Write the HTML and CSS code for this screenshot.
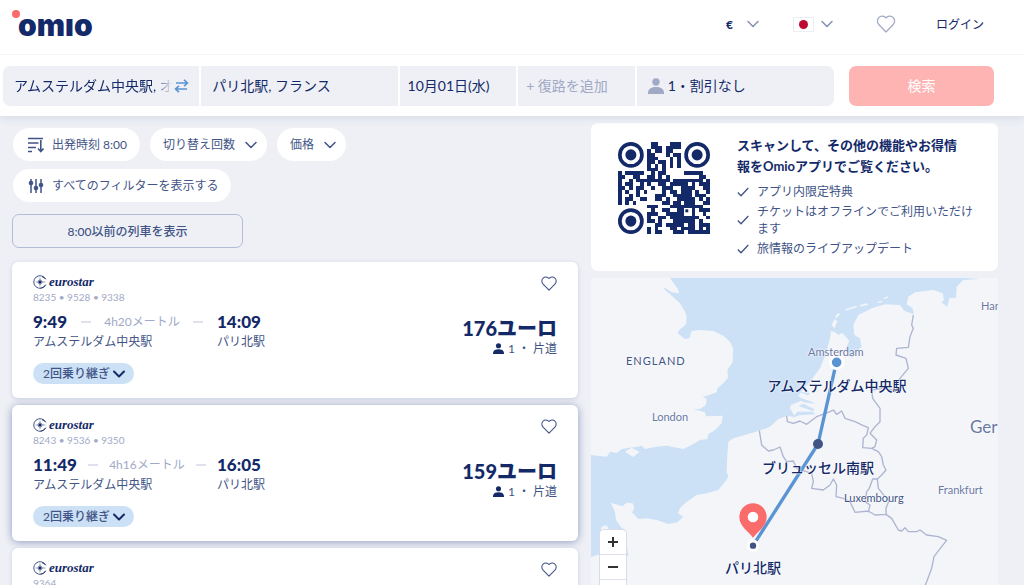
FILE: index.html
```html
<!DOCTYPE html>
<html lang="ja">
<head>
<meta charset="utf-8">
<meta name="viewport" content="width=device-width, initial-scale=1">
<title>Omio</title>
<link rel="stylesheet" href="styles.css">
</head>
<body>
<svg class="defs" aria-hidden="true">
  <symbol id="heart" viewBox="0 0 18 17"><path d="M9 16 2.300 9.200C.4 7.200.4 4 2.300 2.300 4.100.5 7.200.6 9 2.800 10.800.6 13.900.5 15.700 2.300 17.600 4 17.600 7.200 15.700 9.200Z" fill="none" stroke="currentColor" stroke-width="1.200" stroke-linejoin="round"/></symbol>
  <symbol id="chevron" viewBox="0 0 12 8"><path d="m1 1.500 5 5 5-5" fill="none" stroke="currentColor" stroke-linecap="round" stroke-linejoin="round"/></symbol>
  <symbol id="person" viewBox="0 0 16 16"><circle cx="8" cy="4" r="3.700"/><path d="M0 16v-1.500C.5 10.500 3.500 9 8 9s7.500 1.500 8 5.500V16Z"/></symbol>
  <symbol id="tick" viewBox="0 0 12 10"><path d="m.8 5.500 3.200 3.300L11.300 1" fill="none" stroke="currentColor" stroke-width="1.300"/></symbol>
  <symbol id="star" viewBox="0 0 14 14"><path d="M12.700 4.200A6.300 6.300 0 1 0 12.700 9.800M7.500 13.200A6.300 6.300 0 0 0 12.700 9.800M12.700 4.200A5 5 0 0 0 9 1.800" fill="none" stroke="currentColor" stroke-width=".8"/><path d="m7 2 .6 3.900L9.200 4.800 8.100 6.400 13.500 7 8.100 7.600 9.200 9.200 7.600 8.100 7 12 6.400 8.100 4.800 9.200 5.900 7.600 2 7l3.900-.6L4.800 4.800l1.600 1.100Z"/></symbol>
</svg>

<header class="top">
  <div class="topbar">
    <a class="logo" href="#" aria-label="omio"><span class="logo-dot"></span>omıo</a>
    <nav class="tools">
      <label class="currency"><select aria-label="通貨"><option>€</option></select><svg class="chev"><use href="#chevron"/></svg></label>
      <button class="lang" type="button" aria-label="言語"><span class="flag"></span><svg class="chev"><use href="#chevron"/></svg></button>
      <button class="fav-top" type="button" aria-label="お気に入り"><svg width="20" height="18"><use href="#heart"/></svg></button>
      <a class="login" href="#">ログイン</a>
    </nav>
  </div>
  <form class="search">
    <div class="fields">
      <div class="field">
        <input class="fade" type="text" aria-label="出発地" value="アムステルダム中央駅, オランダ">
        <button class="swap" type="button" aria-label="入れ替え"><svg width="15" height="14" viewBox="0 0 15 14"><path d="M2 4h12M10 .8 13.500 4 10 7.200M13 10H1M5 6.800 1.500 10 5 13.200" fill="none" stroke="currentColor" stroke-width="1.600"/></svg></button>
      </div>
      <div class="field"><input type="text" aria-label="目的地" value="パリ北駅, フランス"></div>
      <div class="field date"><input type="text" aria-label="往路" value="10月01日(水)"></div>
      <div class="field date"><input type="text" aria-label="復路" placeholder="+ 復路を追加"></div>
      <button class="field people" type="button"><svg width="16" height="16"><use href="#person"/></svg>1・割引なし</button>
    </div>
    <button class="submit" type="submit">検索</button>
  </form>
</header>

<main class="page">
  <section class="results">
    <div class="filters">
      <button class="pill" type="button"><svg width="16" height="16" viewBox="0 0 16 16"><path d="M0 1.500h15M0 6h10.500M0 10.500h8M0 14.500h4M12.800 3v11M10 11.500l2.800 3 2.700-3" fill="none" stroke="currentColor" stroke-width="1.600"/></svg>出発時刻 8:00</button>
      <button class="pill drop" type="button">切り替え回数<svg class="chev"><use href="#chevron"/></svg></button>
      <button class="pill drop" type="button">価格<svg class="chev"><use href="#chevron"/></svg></button>
      <button class="pill" type="button"><svg width="16" height="16" viewBox="0 0 16 16"><path d="M3 1v14M8 1v14M13 1v14" stroke="currentColor" stroke-width="1.500"/><circle cx="3" cy="5" r="2.300"/><circle cx="8" cy="10" r="2.300"/><circle cx="13" cy="7" r="2.300"/></svg>すべてのフィルターを表示する</button>
    </div>
    <button class="earlier" type="button">8:00以前の列車を表示</button>

    <div class="cards">
      <article class="card">
        <div class="trip">
          <div class="brand"><svg width="14" height="14"><use href="#star"/></svg>eurostar</div>
          <div class="numbers">8235 • 9528 • 9338</div>
          <div class="legs">
            <div class="times"><b>9:49</b><span class="span"><i></i><span>4h20メートル</span><i></i></span></div><b>14:09</b>
            <span>アムステルダム中央駅</span><span>パリ北駅</span>
          </div>
          <button class="changes" type="button">2回乗り継ぎ<svg class="chev"><use href="#chevron"/></svg></button>
        </div>
        <div class="side">
          <button class="fav" type="button" aria-label="お気に入り"><svg width="16" height="15"><use href="#heart"/></svg></button>
          <div class="price">176ユーロ</div>
          <div class="fare"><svg width="11" height="11"><use href="#person"/></svg>1 ・ 片道</div>
        </div>
      </article>
      <article class="card active">
        <div class="trip">
          <div class="brand"><svg width="14" height="14"><use href="#star"/></svg>eurostar</div>
          <div class="numbers">8243 • 9536 • 9350</div>
          <div class="legs">
            <div class="times"><b>11:49</b><span class="span"><i></i><span>4h16メートル</span><i></i></span></div><b>16:05</b>
            <span>アムステルダム中央駅</span><span>パリ北駅</span>
          </div>
          <button class="changes" type="button">2回乗り継ぎ<svg class="chev"><use href="#chevron"/></svg></button>
        </div>
        <div class="side">
          <button class="fav" type="button" aria-label="お気に入り"><svg width="16" height="15"><use href="#heart"/></svg></button>
          <div class="price">159ユーロ</div>
          <div class="fare"><svg width="11" height="11"><use href="#person"/></svg>1 ・ 片道</div>
        </div>
      </article>
      <article class="card">
        <div class="trip">
          <div class="brand"><svg width="14" height="14"><use href="#star"/></svg>eurostar</div>
          <div class="numbers">9364</div>
        </div>
        <div class="side">
          <button class="fav" type="button" aria-label="お気に入り"><svg width="16" height="15"><use href="#heart"/></svg></button>
        </div>
      </article>
    </div>
  </section>

  <aside class="aside">
    <section class="promo">
      <svg class="qr" viewBox="0 0 25 25" role="img" aria-label="QR">
        <g fill="none" stroke="currentColor">
          <circle cx="3.500" cy="3.500" r="3"/><circle cx="21.500" cy="3.500" r="3"/><circle cx="3.500" cy="21.500" r="3"/>
          <path transform="translate(0 .5)" shape-rendering="crispEdges" d="M9 0h2M14 0h3M9 1h3M13 1h4M8 2h1M10 2h2M13 2h2M8 3h2M13 3h1M15 3h2M8 4h3M14 4h1M16 4h1M8 5h2M11 5h2M14 5h1M16 5h1M8 6h1M10 6h1M12 6h1M14 6h1M16 6h1M8 7h3M12 7h1M0 8h1M2 8h5M9 8h1M11 8h2M18 8h5M0 9h2M4 9h2M8 9h2M11 9h1M13 9h1M22 9h2M0 10h1M3 10h1M5 10h9M15 10h8M24 10h1M0 11h1M2 11h2M6 11h1M8 11h1M11 11h2M14 11h5M20 11h1M22 11h3M0 12h2M3 12h1M5 12h2M9 12h1M12 12h3M17 12h4M23 12h2M0 13h1M2 13h1M5 13h1M7 13h1M12 13h1M14 13h2M17 13h3M21 13h1M24 13h1M0 14h1M3 14h1M5 14h1M10 14h3M15 14h5M21 14h3M0 15h1M2 15h2M6 15h2M10 15h2M13 15h1M16 15h5M22 15h1M24 15h1M0 16h1M2 16h1M4 16h1M12 16h2M15 16h2M18 16h3M23 16h2M8 17h3M14 17h6M20 17h3M9 18h1M12 18h2M16 18h2M20 18h1M22 18h3M8 19h3M13 19h5M20 19h1M23 19h1M8 20h1M11 20h2M14 20h8M24 20h1M8 21h2M11 21h1M15 21h6M22 21h1M10 22h2M13 22h5M19 22h2M22 22h3M8 23h1M10 23h1M14 23h2M17 23h4M22 23h1M24 23h1M8 24h1M10 24h2M15 24h3M19 24h6"/>
        </g>
        <g fill="currentColor"><circle cx="3.500" cy="3.500" r="1.500"/><circle cx="21.500" cy="3.500" r="1.500"/><circle cx="3.500" cy="21.500" r="1.500"/><path d="M18.300 18.300h.8v.8h-.8Z"/></g>
      </svg>
      <div class="promo-text">
        <h2>スキャンして、その他の機能やお得情報をOmioアプリでご覧ください。</h2>
        <ul>
          <li><svg><use href="#tick"/></svg>アプリ内限定特典</li>
          <li><svg><use href="#tick"/></svg>チケットはオフラインでご利用いただけます</li>
          <li><svg><use href="#tick"/></svg>旅情報のライブアップデート</li>
        </ul>
      </div>
    </section>

    <section class="map" aria-label="地図">
      <svg class="terrain" viewBox="3 9 1221 921" preserveAspectRatio="xMinYMin slice">
        <path class="sea" d="M240 9 262 40 268 55 245 52 225 38 222 42 245 62 270 85 285 110 290 125 288 148 268 165 263 175 285 192 298 190 305 168 330 165 370 168 400 182 420 200 429 220 428 262 412 285 414 308 400 325 382 340 380 352 350 362 338 365 350 372 348 390 330 402 310 402 345 412 348 424 398 422 395 445 375 465 355 478 352 492 330 495 305 510 280 522 260 518 230 512 200 515 165 522 155 512 145 515 120 518 95 522 80 534 60 530 50 545 3 540V846L30 838 70 850 115 843 105 765 92 755 78 735 75 712 63 683 85 690 97 694 110 683 128 685 133 700 126 712 145 732 170 730 200 735 235 747 262 742 280 725 264 715 270 700 285 685 320 660 350 655 385 645 405 620 415 605 410 590 412 540 415 500 430 490 508 467 540 455 565 432 590 423 615 425 600 400 603 390 640 375 625 362 640 343 660 320 690 280 710 230 722 180 722 168 735 172 745 180 757 173 778 198 765 225 782 240 785 250 810 220 815 215 810 190 793 180 790 150 805 120 845 100 885 88 930 90 942 107 972 118 968 100 950 88 955 65 975 52 1030 45 1058 55 1062 75 1054 82 1072 95 1078 70 1098 68 1100 35 1120 15 1170 12 1130 9Z"/>
        <path class="sea" d="m625 366 42 15 8 5-35-4ZM640 386l32 16-2 7-45-16ZM622 410l45 0 10 8-50 3-20 8ZM630 350l30 4-6 8Z"/>
        <path class="land" d="m105 530 20-12 24 13-20 15ZM724 150l10-18 8 6-8 22ZM735 124l10-10 6 3-12 12ZM767 103l28-10 8 2-35 12ZM810 90l22-5 3 4-24 6ZM862 80l14-3 1 4-14 3ZM880 70l14-6 2 3-12 6ZM35 755l12-4 10 8-10 10-15-5Z"/>
        <path class="border" d="M970 120 965 150 970 160 960 185 955 217 920 220 918 240 948 250 955 280 930 310 920 325 910 345 880 340 845 345 848 370 870 400 870 440 855 455 840 475 860 495 855 515 845 520M590 423 592 440 610 445 630 438 650 448 680 425 720 410 730 405 740 418 755 408 765 430 795 440 820 452 835 458 830 480 820 490 818 518 845 520 865 530 875 545 880 570 888 585 875 600 862 612 848 612 838 640 830 650 825 680 840 690 835 712M862 612 865 640 885 665 898 675 888 700 888 718M508 467 515 510 535 528 550 525 570 516 580 545 590 560 610 558 620 580 665 595 670 620 665 640 700 645 720 630 730 612 740 630 738 665 760 670 780 680 795 712 835 708 855 720 888 718 905 730 925 765 935 768 945 758 955 770 980 770 990 765 1010 780 1045 785 1070 796 1055 815 1032 845 1025 880 1010 920 1005 932"/>
        <path class="route" d="M739 262 684 507 489 812"/>
        <circle cx="740" cy="262" r="19" fill="#5b94d3" stroke="#fff" stroke-width="9"/><circle cx="684" cy="507" r="15" fill="#425486"/><circle cx="489" cy="812" r="14" fill="#425486" stroke="#fff" stroke-width="9"/>
        <path d="M489 788C475 768 448 755 448 726a41 41 0 0 1 82 0C530 755 503 768 489 788Z" fill="#fa6b6b"/><circle cx="489" cy="726" r="16" fill="#fff"/>
      </svg>
      <span class="place country england">ENGLAND</span>
      <span class="place london">London</span>
      <span class="place amsterdam">Amsterdam</span>
      <span class="place hannover">Han</span>
      <span class="place germany">Ger</span>
      <span class="place frankfurt">Frankfurt</span>
      <span class="place luxembourg">Luxembourg</span>
      <span class="stop stop-ams">アムステルダム中央駅</span>
      <span class="stop stop-bru">ブリュッセル南駅</span>
      <span class="stop stop-par">パリ北駅</span>
      <div class="zoom">
        <button type="button" aria-label="拡大"><svg viewBox="0 0 10 10"><path d="M0 5h10M5 0v10"/></svg></button>
        <button type="button" aria-label="縮小"><svg viewBox="0 0 10 10"><path d="M0 5h10"/></svg></button>
        <button type="button" aria-label="北"><svg viewBox="0 0 10 10"><path d="M5 2v8"/></svg></button>
      </div>
    </section>
  </aside>
</main>
</body>
</html>
```
FILE: styles.css
```css
:root {
  --navy: #132968;
  --mid: #425486;
  --soft: #a1a9c6;
  --bg: #eef0f5;
  --blue: #cce1f6;
}
* { box-sizing: border-box; }
body {
  margin: 0;
  height: 100vh;
  overflow: hidden;
  display: flex;
  flex-direction: column;
  background: var(--bg);
  color: var(--mid);
  font: 12px/17px Lato, "Noto Sans CJK JP", sans-serif;
}
button, input, select { font: inherit; color: inherit; border: 0; padding: 0; background: none; }
svg { display: block; fill: currentColor; flex: none; }
a { color: inherit; text-decoration: none; }
.defs { position: absolute; width: 0; height: 0; }
.chev { width: 12px; height: 8px; }

/* header */
.top { background: #fff; box-shadow: 0 2px 8px #d5daea; position: relative; }
.topbar { display: flex; justify-content: space-between; align-items: center; height: 55px; padding: 0 40px 6px 18px; border-bottom: 1px solid #f3f4f7; }
.logo { position: relative; padding-top: 2px; font: 900 30px/36px Inter, sans-serif; color: var(--navy); }
.logo-dot { position: absolute; left: -6px; top: 5px; width: 8px; height: 8px; border-radius: 50%; background: #fa6b6b; }
.tools { display: flex; align-items: center; color: var(--mid); }
.tools .chev { color: #8490b3; stroke-width: 1.5px; }
.currency { display: flex; align-items: center; gap: 12px; margin-right: 34px; }
.currency select { appearance: none; width: 9px; font-weight: 900; color: var(--navy); }
.lang { display: flex; align-items: center; gap: 7px; margin-right: 43px; }
.flag { display: grid; place-items: center; width: 21px; height: 15px; border: 1px solid #eceef3; }
.flag::before { content: ""; width: 9px; height: 9px; border-radius: 50%; background: #bf0a30; }
.fav-top { color: #a1a9c6; margin-right: 40px; }
.login { color: var(--navy); }
.search { display: grid; grid-template-columns: 831fr 145fr; gap: 15px; padding: 11px 30px 10px 3px; font-size: 14px; line-height: 20px; color: var(--navy); }
.fields { display: grid; grid-template-columns: 197fr 197fr 117fr 117fr 198fr; gap: 2px; min-width: 0; }
.field { display: flex; align-items: center; min-width: 0; height: 40px; padding: 0 11px; background: var(--bg); }
.field:first-child { border-radius: 7px 0 0 7px; padding-right: 10px; }
.field:last-child { border-radius: 0 7px 7px 0; }
.field input { width: 100%; min-width: 0; outline: 0; }
.field input::placeholder { color: var(--soft); opacity: 1; }
.field.date { padding: 0 8px; }
.fade { mask-image: linear-gradient(to left, transparent, #000 18px); }
.swap { color: #5b94d3; margin-left: 2px; }
.people { gap: 4px; }
.people svg { color: var(--soft); }
.submit { border-radius: 7px; background: #ffb4b4; color: #fff; }

/* page */
.page { flex: 1; min-height: 0; display: grid; grid-template: minmax(0, 1fr) / 566fr 407fr; gap: 13px; padding: 7px 26px 0 12px; }
.results { min-width: 0; padding-top: 5px; }
.filters { display: flex; flex-wrap: wrap; gap: 8px 10px; max-width: 400px; padding-left: 1px; }
.pill { display: flex; align-items: center; gap: 8px; height: 33px; padding: 0 13px 0 15px; border-radius: 17px; background: #fff; }
.pill.drop { padding: 0 10px 0 13px; gap: 10px; }
.pill .chev { stroke-width: 1.5px; }
.earlier { display: block; width: 231px; height: 34px; margin: 12px 0 14px; border: 1px solid #b4bbd4; border-radius: 7px; font-weight: 500; }
.cards { display: flex; flex-direction: column; gap: 7px; }
.card { display: flex; justify-content: space-between; min-height: 136px; padding: 13px 21px 14px; border-radius: 6px; background: #fff; box-shadow: 0 1px 4px #c9cfe2; }
.card.active { box-shadow: 0 1px 8px #8f9ac0; }
.brand { display: flex; align-items: center; gap: 2px; height: 14px; font: italic bold 13px/14px "Liberation Serif", serif; color: var(--navy); }
.numbers { margin: 1px 0 5px; font-size: 10px; line-height: 15px; color: var(--soft); }
.legs { display: grid; grid-template-columns: 184px auto; }
.legs b { font-size: 17px; font-weight: 900; line-height: 23px; color: var(--navy); }
.times { display: flex; align-items: center; }
.span { flex: 1; display: flex; align-items: center; justify-content: space-evenly; color: var(--soft); }
.span i { width: 10px; height: 2px; background: #dfe2ec; }
.changes { display: flex; align-items: center; gap: 3px; height: 21px; margin-top: 13px; padding: 0 9px 0 10px; border-radius: 11px; background: var(--blue); font-weight: 500; }
.changes .chev { color: var(--navy); stroke-width: 2px; }
.side { display: flex; flex-direction: column; align-items: flex-end; }
.fav { margin-top: 1px; }
.price { margin-top: 25px; font-size: 20px; font-weight: 900; line-height: 25px; color: var(--navy); }
.fare { display: flex; align-items: center; gap: 4px; line-height: 15px; }
.fare svg { color: var(--navy); }

/* promo and map */
.aside { display: flex; flex-direction: column; gap: 7px; min-width: 0; min-height: 0; }
.promo { display: flex; gap: 27px; padding: 12px 22px 14px 27px; border-radius: 7px; background: #fff; }
.qr { width: 92px; height: 92px; margin-top: 7px; color: var(--navy); }
.promo h2 { margin: 0 0 6px; padding-right: 10px; font-size: 13px; font-weight: 700; line-height: 21px; color: var(--navy); }
.promo ul { display: flex; flex-direction: column; gap: 3px; margin: 0; padding: 0; list-style: none; }
.promo li { display: flex; align-items: center; gap: 8px; }
.promo li svg { width: 12px; height: 10px; }
.map { position: relative; flex: 1; min-height: 0; overflow: hidden; background: #f3f5f9; }
.terrain { position: absolute; inset: 0; width: 100%; height: 100%; }
.sea { fill: var(--blue); }
.land { fill: #f3f5f9; }
.border { fill: none; stroke: #adb5d1; stroke-width: 4; stroke-linejoin: round; }
.route { fill: none; stroke: #5b94d3; stroke-width: 10; }
.place, .stop { position: absolute; white-space: nowrap; text-shadow: 0 0 2px #fff, 0 0 2px #fff; }
.place { font-size: 11px; color: #6a78a3; }
.england { left: 35px; top: 74px; letter-spacing: 1px; color: var(--mid); }
.london { left: 61px; top: 130px; }
.amsterdam { left: 217px; top: 65px; }
.hannover { left: 390px; top: 19px; }
.germany { left: 379px; top: 140px; font-size: 17px; }
.frankfurt { left: 347px; top: 203px; }
.luxembourg { left: 253px; top: 211px; color: var(--mid); }
.stop { font-size: 14px; font-weight: 500; line-height: 20px; color: var(--navy); transform: translate(-50%, -50%); }
.stop-ams { left: 246px; top: 108px; }
.stop-bru { left: 227px; top: 190px; }
.stop-par { left: 162px; top: 290px; }
.zoom { position: absolute; left: 9px; top: 252px; width: 26px; border-radius: 4px; background: #fff; box-shadow: 0 0 0 1px #d9dde9; }
.zoom button { display: grid; place-items: center; width: 100%; height: 25px; border-bottom: 1px solid #dfe2ec; }
.zoom svg { width: 10px; height: 10px; stroke: #333; stroke-width: 2; }
```
